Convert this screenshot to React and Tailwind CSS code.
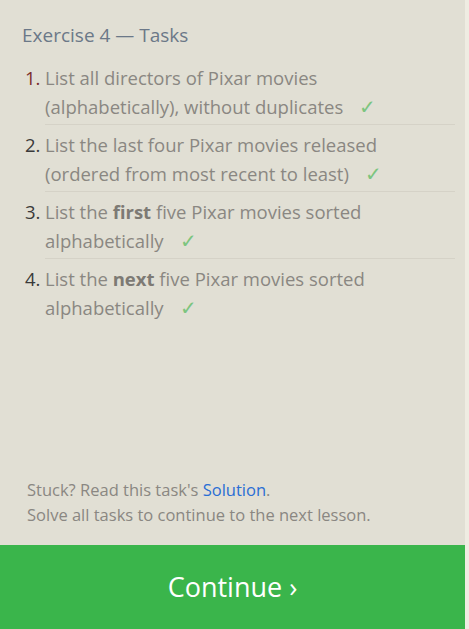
const tasks = [
  { id: 1, text: <>List all directors of Pixar movies (alphabetically), without duplicates</> },
  { id: 2, text: <>List the last four Pixar movies released (ordered from most recent to least)</> },
  { id: 3, text: <>List the <b className="font-bold text-[#7d7a74]">first</b> five Pixar movies sorted alphabetically</> },
  { id: 4, text: <>List the <b className="font-bold text-[#7d7a74]">next</b> five Pixar movies sorted alphabetically</> },
];

export default function App() {
  return (
    <div
      className="flex h-[629px] w-[469px] bg-[#efece2]"
      style={{ fontFamily: '"Open Sans", "Noto Sans", sans-serif' }}
    >
      <div className="flex w-[465px] flex-col bg-[#e1dfd4]">
        <div className="flex-1 pl-[22px] pr-[10px] pt-[22px]">
          <h2 className="text-[19px] leading-[26px] text-[#6b7888]">Exercise 4 — Tasks</h2>
          <ol className="mt-[10px]">
            {tasks.map((t, i) => (
              <li key={t.id} className="flex">
                <span className={`w-[23px] shrink-0 pl-[3px] pt-[5px] text-[18.5px] leading-[29px] ${t.id === 1 ? 'text-[#7a2e2e]' : 'text-[#3a3a3a]'}`}>
                  {t.id}.
                </span>
                <div
                  className={`flex-1 pb-[3px] pt-[5px] text-[18.5px] leading-[29px] text-[#8a8782] ${
                    i < tasks.length - 1 ? 'border-b border-[#d5d2c7]' : ''
                  }`}
                >
                  {t.text}
                  <span className="ml-[16px] text-[20px] text-[#7cc57f]">✓</span>
                </div>
              </li>
            ))}
          </ol>
        </div>
        <div className="px-[27px] pb-[18px] text-[16.5px] leading-[25px] text-[#8a8782]">
          <p>
            Stuck? Read this task's <a className="text-[#2a6ed4]">Solution</a>.
          </p>
          <p>Solve all tasks to continue to the next lesson.</p>
        </div>
        <button className="flex h-[84px] w-full items-center justify-center bg-[#3ab54b] text-[27px] text-white">
          Continue ›
        </button>
      </div>
    </div>
  );
}
